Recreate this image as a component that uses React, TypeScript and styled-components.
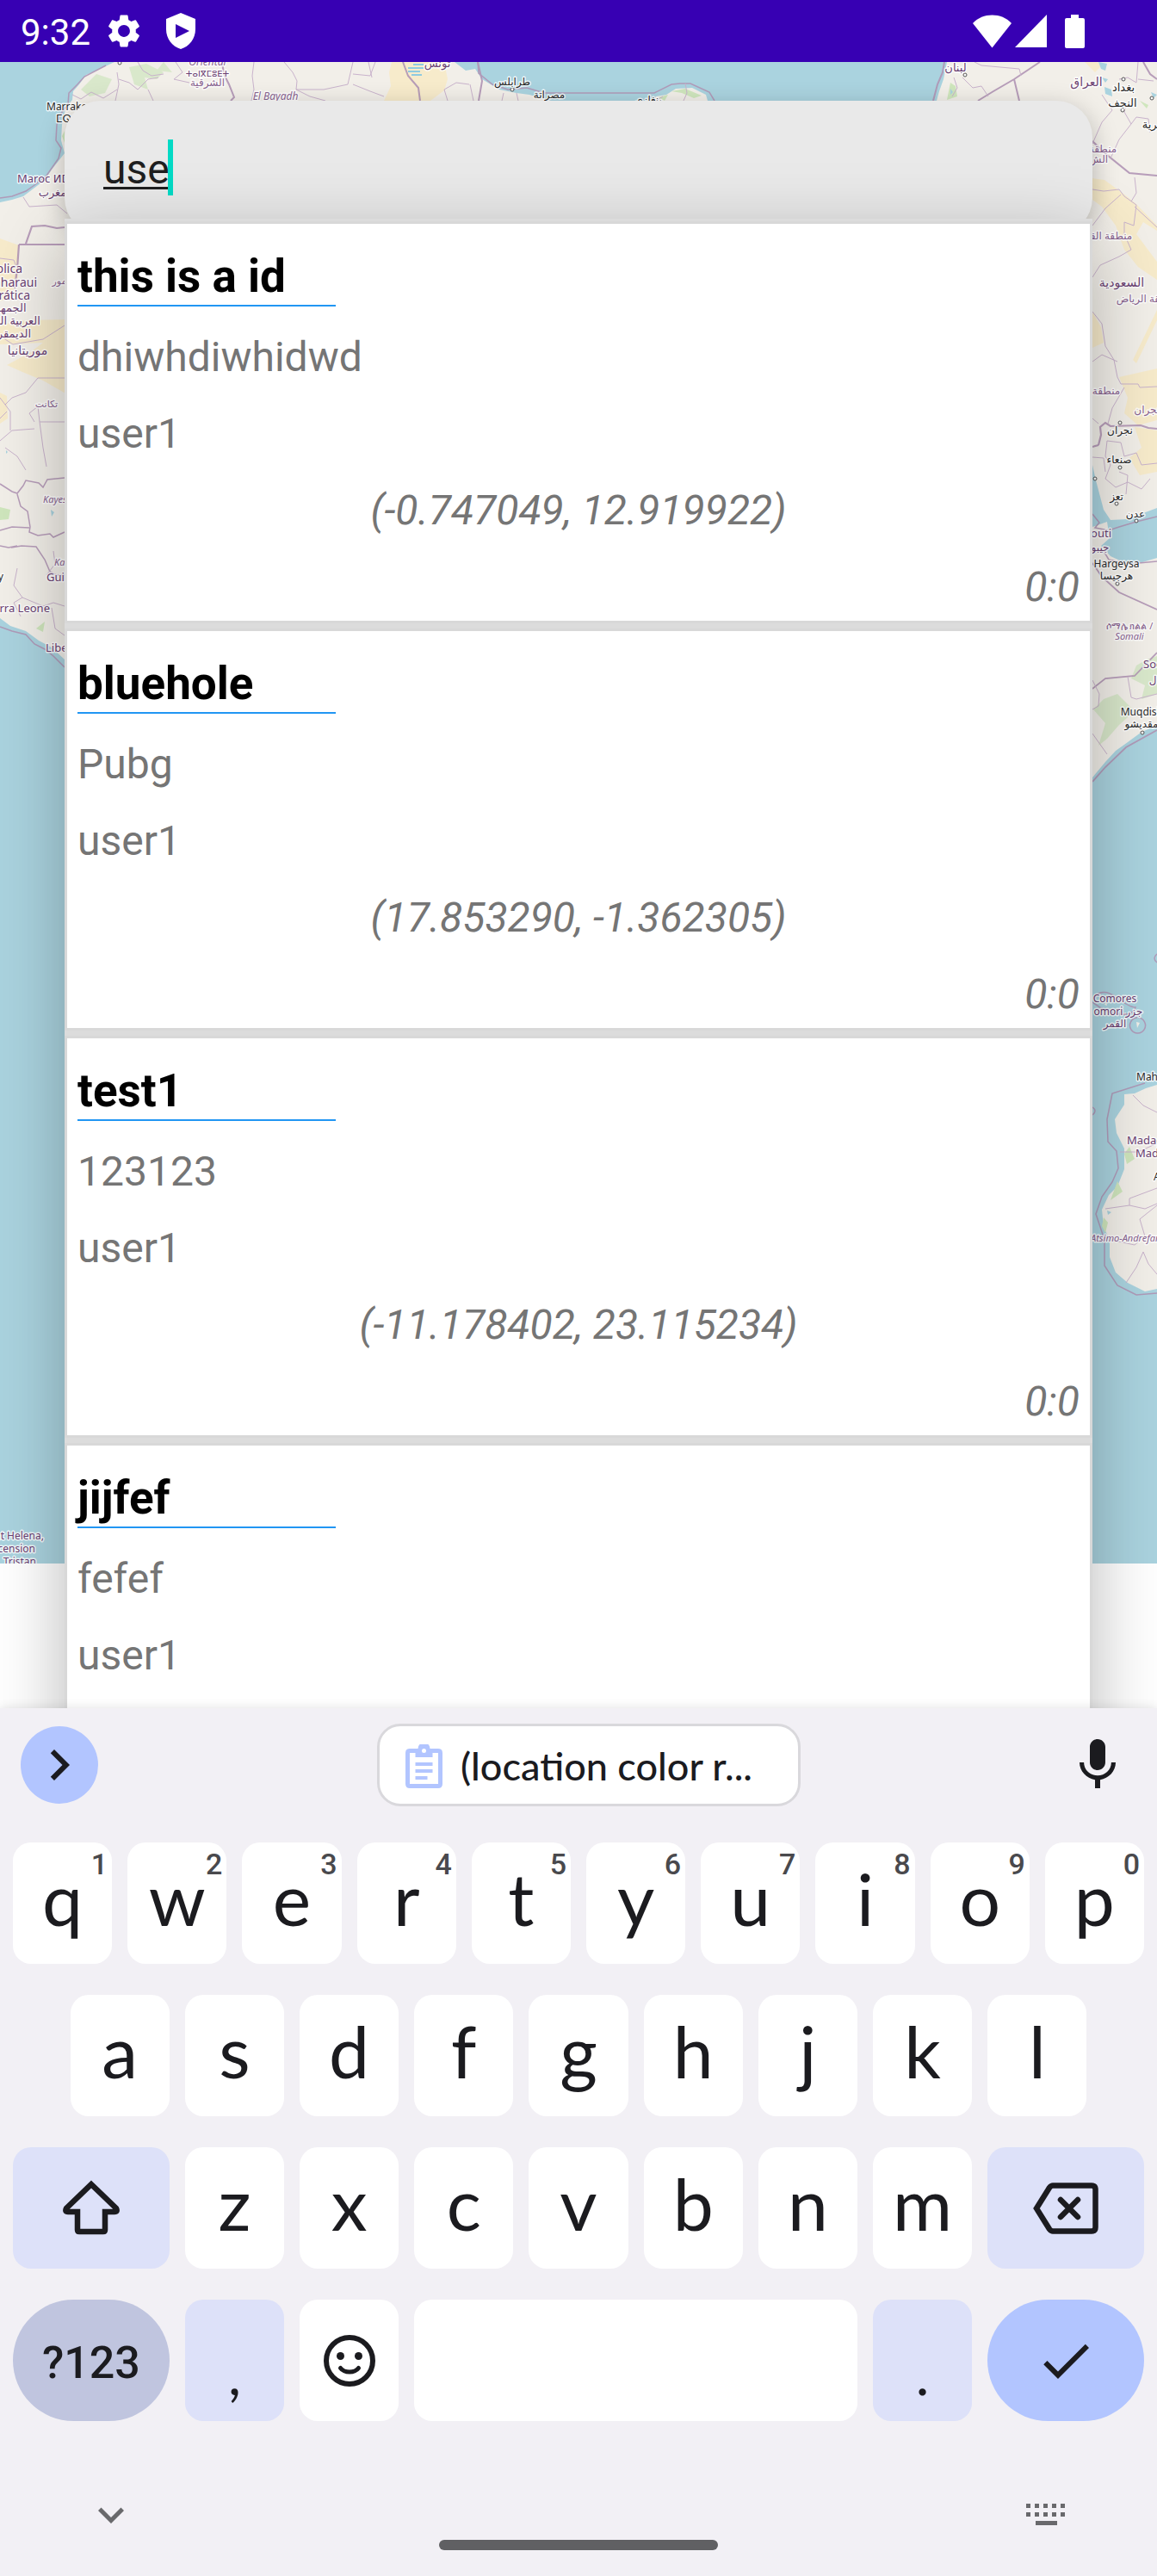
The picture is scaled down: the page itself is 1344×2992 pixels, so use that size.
import React from "react";
import styled, { createGlobalStyle, css } from "styled-components";
import { MdCheck, MdChevronRight, MdKeyboardArrowDown, MdMic, MdSettings } from "react-icons/md";

const GlobalStyle = createGlobalStyle`
  *, *::before, *::after { box-sizing: border-box; }
  body {
    margin: 0;
    background: #ffffff;
    font-family: Roboto, "Noto Sans", sans-serif;
  }
  button { border: 0; padding: 0; margin: 0; cursor: pointer; font-family: inherit; }
  svg { display: block; }
`;

/* ---------- shell ---------- */

const Screen = styled.div`
  display: flex;
  flex-direction: column;
  height: 100vh;
  overflow: hidden;
`;

const StatusBar = styled.header`
  display: flex;
  flex: none;
  align-items: center;
  justify-content: space-between;
  height: 72px;
  padding: 0 84px 0 24px;
  background: #3700b3;
  color: #ffffff;
`;

const StatusGroup = styled.div<{ $gap: number }>`
  display: flex;
  align-items: center;
  gap: ${(p) => p.$gap}px;
`;

const Clock = styled.span`
  padding-top: 3px;
  font-size: 42px;
  line-height: 72px;
`;

const Stage = styled.main`
  position: relative;
  display: flex;
  flex: 1;
  flex-direction: column;
  min-height: 0;
  padding: 45px 75px 0;
  overflow: hidden;
`;

const MapCanvas = styled.svg`
  position: absolute;
  top: 0;
  left: 0;
  width: 100%;
  height: auto;
`;

/* ---------- search ---------- */

const SearchCard = styled.label`
  position: relative;
  display: flex;
  flex: none;
  align-items: center;
  height: 155px;
  padding: 0 45px;
  border-radius: 42px;
  background: #e9e9e9;
  box-shadow: 0 9px 30px rgba(0, 0, 0, 0.26);
`;

const SearchInput = styled.input`
  field-sizing: content;
  min-width: 24px;
  padding: 3px 0 0;
  border: 0;
  outline: 0;
  background: transparent;
  color: #1f1f1f;
  font-family: Roboto, sans-serif;
  font-size: 48px;
  line-height: 57px;
  text-decoration: underline;
  text-decoration-thickness: 3px;
  text-underline-offset: 4px;
`;

const Caret = styled.span`
  width: 6px;
  height: 65px;
  margin-left: -2px;
  background: #03dac5;
`;

const Results = styled.ul`
  position: relative;
  flex: none;
  margin: -18px 0 0;
  padding: 3px 0 0;
  list-style: none;
  background: #dcdcdc;
  box-shadow: 0 24px 78px rgba(0, 0, 0, 0.28);
`;

const ResultItem = styled.li`
  display: flex;
  flex-direction: column;
  gap: 30px;
  min-height: 467px;
  margin-bottom: 6px;
  padding: 29px 12px 11px;
  border: 3px solid #d8d8d8;
  background: #ffffff;
`;

const ResultTitle = styled.h2`
  width: 300px;
  margin: 0;
  border-bottom: 2px solid #2196f3;
  color: #000000;
  font-size: 53px;
  font-weight: 700;
  line-height: 65px;
`;

const ResultBody = styled.div`
  display: flex;
  flex-direction: column;
  gap: 32px;
`;

const Line = styled.p<{ $align?: "center" | "right" }>`
  margin: 0;
  color: #757575;
  font-size: 48px;
  line-height: 57px;
  text-align: ${(p) => p.$align ?? "left"};
  font-style: ${(p) => (p.$align ? "italic" : "normal")};
`;

/* ---------- keyboard ---------- */

const Keyboard = styled.section`
  position: relative;
  display: flex;
  flex: none;
  flex-direction: column;
  background: #f2f0f5;
  color: #1b1b1f;
  font-family: Lato, "Noto Sans", sans-serif;
  box-shadow: 0 0 12px rgba(0, 0, 0, 0.12);
`;

const Strip = styled.div`
  display: grid;
  grid-template-columns: 1fr auto 1fr;
  align-items: center;
  height: 132px;
  padding-left: 24px;
`;

const ExpandButton = styled.button`
  display: grid;
  place-items: center;
  width: 90px;
  height: 90px;
  border-radius: 50%;
  background: #b2c5ff;
  color: #1b1b1f;
`;

const VoiceButton = styled.button`
  display: grid;
  place-items: center;
  justify-self: end;
  width: 90px;
  height: 90px;
  margin-right: 24px;
  background: transparent;
  color: #1b1b1f;
`;

const ClipChip = styled.button`
  display: flex;
  align-items: center;
  gap: 21px;
  width: 492px;
  height: 96px;
  padding: 3px 30px 0;
  border: 3px solid #d9d8dc;
  border-radius: 27px;
  background: #ffffff;
  color: #1b1b1f;
  font-size: 45px;
  font-weight: 500;
  line-height: 57px;
`;

const Rows = styled.div`
  display: flex;
  flex-direction: column;
  gap: 36px;
  padding: 24px 15px 0;
`;

const KeyRow = styled.div`
  display: grid;
  grid-template-columns: repeat(20, minmax(0, 1fr));
  column-gap: 18px;
`;

type Tone = "plain" | "soft" | "mode" | "accent";

const tones: Record<Tone, string> = {
  plain: "#ffffff",
  soft: "#dde1f9",
  mode: "#c0c5df",
  accent: "#b2c5ff",
};

const Key = styled.button<{ $span?: number; $start?: number; $tone?: Tone; $round?: boolean }>`
  position: relative;
  display: flex;
  align-items: center;
  justify-content: center;
  grid-column: ${(p) => (p.$start ? `${p.$start} / ` : "")} span ${(p) => p.$span ?? 2};
  height: 141px;
  border-radius: ${(p) => (p.$round ? 72 : 21)}px;
  background: ${(p) => tones[p.$tone ?? "plain"]};
  color: #1b1b1f;
`;

const KeyText = styled.span<{ $kind?: "letter" | "mode" | "mark" }>`
  font-size: 84px;
  line-height: 129px;
  padding-bottom: 12px;
  ${(p) =>
    p.$kind === "mode" &&
    css`
      font-family: Roboto, sans-serif;
      font-size: 52px;
      font-weight: 500;
      padding: 6px 0 0;
    `}
  ${(p) =>
    p.$kind === "mark" &&
    css`
      font-size: 66px;
      padding: 30px 0 0;
      line-height: 111px;
    `}
`;

const Hint = styled.span`
  position: absolute;
  top: 6px;
  right: 5px;
  color: #49494d;
  font-family: Roboto, sans-serif;
  font-size: 34px;
  font-weight: 500;
  line-height: 39px;
`;

const NavBar = styled.nav`
  display: grid;
  grid-template-columns: 1fr auto 1fr;
  height: 180px;
  padding: 73px 93px 0;
  color: #69696c;
`;

const NavButton = styled.button<{ $end?: boolean }>`
  display: grid;
  place-items: center;
  justify-self: ${(p) => (p.$end ? "end" : "start")};
  width: 72px;
  height: 72px;
  background: transparent;
  color: inherit;
`;

const HomePill = styled.button`
  align-self: end;
  width: 324px;
  height: 12px;
  margin-bottom: 30px;
  border-radius: 6px;
  background: #606063;
`;

/* ---------- icons ---------- */

const ShieldIcon = () => (
  <svg width="34" height="42" viewBox="0 0 34 42" fill="currentColor" aria-hidden>
    <path fillRule="evenodd" d="M17 0 34 7V19C34 30 27 39 17 42 7 39 0 30 0 19V7ZM11 13V29L27 21Z" />
  </svg>
);

const WifiIcon = () => (
  <svg width="45" height="39" viewBox="0 0 45 39" fill="currentColor" aria-hidden>
    <path d="M22.500 38.500 0 10C6 3.500 14 .5 22.500.5S39 3.500 45 10Z" />
  </svg>
);

const SignalIcon = () => (
  <svg width="37" height="38" viewBox="0 0 37 38" fill="currentColor" aria-hidden>
    <path d="M37 0V38H0Z" />
  </svg>
);

const BatteryIcon = () => (
  <svg width="23" height="39" viewBox="0 0 23 39" fill="currentColor" aria-hidden>
    <path d="M7 0H16V4H21Q23 4 23 6V37Q23 39 21 39H2Q0 39 0 37V6Q0 4 2 4H7Z" />
  </svg>
);

const ClipboardIcon = () => (
  <svg width="43" height="51" viewBox="0 0 43 51" fill="#b2c5ff" aria-hidden>
    <path
      fillRule="evenodd"
      d="M5 5H14.500A7 7 0 0 1 28.500 5H38Q43 5 43 10V46Q43 51 38 51H5Q0 51 0 46V10Q0 5 5 5ZM5 10V46H38V10H31.500V15H11.500V10ZM21.500 5A2.500 2.500 0 1 0 21.500 10 2.500 2.500 0 0 0 21.500 5Z"
    />
    <path d="M11.500 21H31.500V25H11.500ZM11.500 29H31.500V33H11.500ZM11.500 37H25.500V41H11.500Z" />
  </svg>
);

const ShiftIcon = () => (
  <svg width="72" height="72" viewBox="0 0 72 72" fill="none" stroke="currentColor" strokeWidth="6.500" aria-hidden>
    <path d="M36 8 65 36Q67 40 63 40H52V61Q52 63 50 63H22Q20 63 20 61V40H9Q5 40 7 36Z" />
  </svg>
);

const BackspaceIcon = () => (
  <svg width="78" height="60" viewBox="0 0 78 60" fill="none" stroke="currentColor" strokeWidth="6.500" aria-hidden>
    <path d="M5 30 20 6Q22 3.500 24 3.500H69Q73.500 3.500 73.500 8V52Q73.500 56.500 69 56.500H24Q22 56.500 20 54Z" />
    <path strokeLinecap="round" d="M33 20 53 40M53 20 33 40" />
  </svg>
);

const EmojiIcon = () => (
  <svg width="60" height="60" viewBox="0 0 60 60" fill="none" stroke="currentColor" strokeWidth="6" aria-hidden>
    <circle cx="30" cy="30" r="27" />
    <circle cx="19.500" cy="24.500" r="4.500" fill="currentColor" stroke="none" />
    <circle cx="40.500" cy="24.500" r="4.500" fill="currentColor" stroke="none" />
    <path strokeLinecap="round" d="M19.500 38.500Q23 43 30 43T40.500 38.500" strokeWidth="5" />
  </svg>
);

const KeyboardIcon = () => (
  <svg width="46" height="26" viewBox="0 0 46 26" fill="currentColor" aria-hidden>
    {[0, 10, 20, 30, 40].map((x) => (
      <path key={x} d={`M${x} 0h5v5h-5zM${x} 10h5v5h-5z`} />
    ))}
    <path d="M11 20H36V25H11Z" />
  </svg>
);

/* ---------- map ---------- */

const Halo = styled.text<{ $tone?: "city" | "country" | "region"; $size?: number }>`
  font-family: "Noto Sans", "DejaVu Sans", sans-serif;
  font-size: ${(p) => p.$size ?? 12}px;
  fill: ${(p) => (p.$tone === "city" ? "#2b2b2b" : p.$tone === "country" ? "#6b4273" : "#8a6591")};
  stroke: #ffffff;
  stroke-width: 3px;
  stroke-opacity: 0.8;
  stroke-linejoin: round;
  paint-order: stroke;
`;

type Label = {
  t: string;
  x: number;
  y: number;
  s?: number;
  k?: "city" | "country" | "region";
  a?: "start" | "middle" | "end";
  i?: boolean;
};

const labels: Label[] = [
  { t: "Oriental", x: 241, y: 76, i: true },
  { t: "ⵜⴰⵏⴳⵎⵓⴹⵜ", x: 241, y: 89, s: 10, k: "country" },
  { t: "الشرقية", x: 241, y: 100 },
  { t: "El Bayadh", x: 320, y: 116, i: true },
  { t: "Marrake", x: 54, y: 128, k: "city", a: "start" },
  { t: "ⵎⵕⵕ", x: 65, y: 142, k: "city", a: "start" },
  { t: "Maroc ⵍⵎ", x: 20, y: 212, s: 13, k: "country", a: "start" },
  { t: "مغرب", x: 61, y: 228, s: 13, k: "country" },
  { t: "República", x: 26, y: 317, s: 14, k: "country", a: "end" },
  { t: "Saharaui", x: 43, y: 333, s: 14, k: "country", a: "end" },
  { t: "Democrática", x: 35, y: 348, s: 14, k: "country", a: "end" },
  { t: "الجمهورية", x: 4, y: 362, s: 13, k: "country" },
  { t: "العربية الصحراوية", x: 0, y: 377, s: 13, k: "country" },
  { t: "الديمقراطية", x: 4, y: 392, s: 13, k: "country" },
  { t: "موريتانيا", x: 32, y: 412, s: 14, k: "country" },
  { t: "مور", x: 69, y: 330, s: 11 },
  { t: "تكانت", x: 54, y: 473, s: 11 },
  { t: "Kayes", x: 50, y: 584, s: 11, a: "start", i: true },
  { t: "Ka", x: 63, y: 657, s: 11, a: "start", i: true },
  { t: "Gui", x: 54, y: 675, s: 13, k: "country", a: "start" },
  { t: "Conakry", x: 4, y: 674, s: 12, k: "city", a: "end" },
  { t: "Sierra Leone", x: 58, y: 711, s: 13, k: "country", a: "end" },
  { t: "Libe", x: 53, y: 757, s: 13, k: "country", a: "start" },
  { t: "Saint Helena,", x: 51, y: 1788, s: 12, k: "country", a: "end" },
  { t: "Ascension", x: 41, y: 1803, s: 12, k: "country", a: "end" },
  { t: "Tristan", x: 42, y: 1818, s: 12, k: "country", a: "end" },
  { t: "تونس", x: 508, y: 78, s: 13, k: "country" },
  { t: "طرابلس", x: 595, y: 99, k: "city" },
  { t: "مصراتة", x: 638, y: 114, k: "city" },
  { t: "بنغازي", x: 753, y: 120, k: "city" },
  { t: "لبنان", x: 1110, y: 83, s: 13, k: "country" },
  { t: "العراق", x: 1262, y: 100, s: 14, k: "country" },
  { t: "بغداد", x: 1305, y: 106, s: 13, k: "city" },
  { t: "النجف", x: 1304, y: 124, s: 13, k: "city" },
  { t: "البصرية", x: 1347, y: 149, s: 13, k: "city" },
  { t: "منطقة", x: 1281, y: 177, s: 12 },
  { t: "الش", x: 1276, y: 189, s: 12 },
  { t: "منطقة القصيم", x: 1280, y: 278, s: 12 },
  { t: "السعودية", x: 1303, y: 333, s: 14, k: "country" },
  { t: "منطقة الرياض", x: 1332, y: 351, s: 12 },
  { t: "منطقة", x: 1285, y: 458, s: 12 },
  { t: "منطقة نجران", x: 1350, y: 480, s: 12 },
  { t: "نجران", x: 1301, y: 504, s: 12, k: "city" },
  { t: "صنعاء", x: 1300, y: 538, s: 12, k: "city" },
  { t: "تعز", x: 1297, y: 581, s: 12, k: "city" },
  { t: "عدن", x: 1319, y: 601, s: 12, k: "city" },
  { t: "outi", x: 1291, y: 624, s: 13, k: "country", a: "end" },
  { t: "جيبو", x: 1278, y: 640, s: 12, k: "country" },
  { t: "Hargeysa", x: 1297, y: 659, s: 12, k: "city" },
  { t: "هرجيسا", x: 1297, y: 673, s: 12, k: "city" },
  { t: "ሶማሌ ክልል /", x: 1312, y: 731, s: 11 },
  { t: "Somali", x: 1312, y: 743, s: 11, i: true },
  { t: "Soomaaliya", x: 1328, y: 776, s: 13, k: "country", a: "start" },
  { t: "الصومال", x: 1356, y: 794, s: 12, k: "country" },
  { t: "Muqdisho", x: 1330, y: 831, s: 12, k: "city" },
  { t: "مقديشو", x: 1326, y: 845, s: 12, k: "city" },
  { t: "Comores", x: 1295, y: 1164, s: 12, k: "country" },
  { t: "omori جزر", x: 1299, y: 1179, s: 12, k: "country" },
  { t: "القمر", x: 1295, y: 1193, s: 12, k: "country" },
  { t: "Mahajanga", x: 1320, y: 1255, s: 12, k: "city", a: "start" },
  { t: "Madagasikara", x: 1309, y: 1329, s: 13, k: "country", a: "start" },
  { t: "Madagascar", x: 1319, y: 1344, s: 13, k: "country", a: "start" },
  { t: "Antananarivo", x: 1340, y: 1371, s: 12, k: "city", a: "start" },
  { t: "Atsimo-Andrefana", x: 1267, y: 1442, s: 11, a: "start", i: true },
];

const pins: [number, number][] = [
  [139, 73], [595, 104], [1305, 92], [1304, 128], [1121, 87], [1338, 114], [1301, 491], [1301, 543],
  [1297, 585], [1320, 605], [1272, 556], [1298, 678], [1327, 851],
];

const WorldMap = () => (
  <MapCanvas viewBox="0 72 1344 1744" role="img" aria-label="Map of Africa and the Middle East">
    <rect x="0" y="72" width="1344" height="1744" fill="#aad3df" />
    <g fill="#f2efe9">
      <path d="M133 72 112 82 100 87 92 98 85 106 84 116 76 126 72 145 71 163 75 178 60 197 52 209 35 222 27 228 14 232 0 235V718L12 727 30 733 45 744 60 752 75 766 120 790H600L700 300 822 117 820 110 804 102 785 103 774 110 762 112 756 120 640 117 615 110 600 108 580 104 560 92 552 80 541 82 528 72Z" />
      <path d="M1100 72 1096 92 1091 106 1088 117 1150 300 1269 540 1273 558 1282 592 1290 604 1310 603 1328 596 1344 590V72Z" />
      <path d="M1230 560 1269 612 1286 606 1289 625 1279 634 1290 646 1305 653 1320 655 1344 648V842L1325 851 1310 862 1296 872 1284 885 1269 903 1200 940Z" />
      <path d="M1344 1260 1331 1264 1318 1270 1306 1271 1306 1283 1295 1300 1297 1316 1306 1334 1306 1358 1298 1378 1288 1388 1280 1405 1282 1425 1289 1440 1289 1460 1296 1478 1310 1490 1330 1500 1344 1497Z" />
      <path d="M1285 1164 1283 1167 1286 1168ZM1308 1176 1304 1177 1308 1180ZM1320 1187 1324 1188 1321 1194Z" />
    </g>
    <g fill="#f7ebcb">
      <path d="M0 277 22 285 21 322 12 345 0 350Z" />
      <path d="M0 377 30 372 78 371V458L50 442 26 432 8 424 34 410 50 398 0 400Z" />
      <path d="M0 456 8 460 9 486 0 492Z" />
      <path d="M455 72 452 84 454 100 446 117H500L516 105 520 92 516 72Z" />
      <path d="M1260 72 1272 84 1280 76 1275 72Z" />
      <path d="M1269 207 1283 209 1305 225 1320 237 1344 262V268L1328 258 1320 272 1344 304V325L1322 310 1306 290 1296 262 1280 240 1269 232Z" />
      <path d="M1344 360 1332 385 1316 418 1320 422 1344 372Z" />
      <path d="M1300 438 1344 428V488L1322 494 1306 480 1310 462Z" />
      <path d="M1318 496 1344 500V548L1324 552 1312 532 1326 520Z" />
      <path d="M1269 362 1279 380 1282 398 1269 404Z" />
    </g>
    <g fill="#cfe6bd">
      <path d="M150 78 170 74 190 84 182 92 168 90 172 104 156 98ZM190 72 200 84 182 82ZM112 86 130 92 122 108 104 112 94 104Z" opacity=".7" />
      <path d="M780 106 796 103 815 111 806 114 792 108ZM765 113 776 110 772 117Z" />
      <path d="M1104 96 1110 100 1112 112 1100 116Z" />
      <path d="M1324 117 1334 122 1332 126Z" />
      <path d="M0 589 12 592 10 603 0 604ZM42 730 52 722 50 734Z" />
      <path d="M1320 773 1332 766 1344 762V806L1326 812 1330 796 1314 788ZM1270 824 1282 812 1298 806 1318 826 1300 842 1286 858 1276 866 1284 840Z" opacity=".7" />
      <path d="M1312 1332 1318 1346 1309 1352 1306 1340ZM1298 1372 1304 1384 1290 1394ZM1282 1414 1287 1420 1284 1432 1280 1424Z" />
      <path d="M72 158 75 152V166Z" />
    </g>
    <g fill="#aad3df">
      <path d="M1276 72 1286 74 1284 82 1279 80ZM1280 90 1287 92 1284 96ZM1283 101 1291 104 1292 112 1284 109ZM1337 107 1344 110 1340 114Z" />
      <path d="M1104 103 1107 107 1104 110ZM59 592 63 595 60 600ZM7 523 9 525 7 527Z" />
      <path d="M1286 1406 1291 1408 1287 1411Z" />
    </g>
    <path d="M480 75h12M474 79h18M474 83h14M478 87h12" stroke="#8fcbe0" strokeWidth="2" />
    <g fill="none" stroke="#b195b5" strokeWidth="1.500" opacity=".9">
      <path d="M123 76 98 89 90 98 80 108 79 121 70 133 66 145 65 163 71 172 68 184 54 204 40 215 30 222 14 228 0 230" />
      <path d="M0 562 14 571 20 573 27 564 30 558 45 561 50 566 55 557 75 555" />
      <path d="M20 574 24 588 32 594 35 612 34 618 44 622 58 620 62 624 75 618M0 616 14 612 34 613M0 634 10 636 20 634M13 636 25 634 42 635 52 650 58 664 66 668 75 668" />
      <path d="M30 283 37 263 52 262 66 265 75 264M22 284H78M22 284 20 312 17 335" strokeWidth="2.200" />
      <path d="M0 728 14 733 30 737 40 748 52 754 62 762 75 775" />
      <path d="M555 72 556 85 572 98 590 104 612 102 632 108H760L780 98 790 97 802 97 824 107 830 117" />
      <path d="M468 72 474 88 486 102 488 117M555 72 560 94 556 117" strokeWidth="2" />
      <path d="M258 72 260 86 266 98 272 113 268 117" strokeWidth="2" />
      <path d="M1097 72 1095 84 1089 98 1084 117M1208 72 1178 92 1154 106 1136 117M1178 92 1184 117M1328 72 1336 86 1344 92" strokeWidth="2" />
      <path d="M1269 164 1286 180 1312 201 1344 204" strokeWidth="2.200" />
      <path d="M1276 517 1279 505 1278 496 1284 491 1290 495 1325 494 1334 497 1344 498M1276 517 1269 519" strokeWidth="2.200" />
      <path d="M1269 597 1277 607 1272 613 1288 616 1300 612 1320 606 1344 600M1269 640 1282 640 1288 650 1312 655 1344 652" />
      <path d="M1269 654 1280 670 1300 688 1344 708M1269 800 1284 788 1318 785 1344 758M1269 908 1284 891 1308 868 1344 848" strokeWidth="1.800" />
      <path d="M1330 1258 1292 1270 1286 1300 1287 1326 1297 1337 1299 1357 1292 1373 1280 1390 1273 1410 1283 1440 1283 1470 1298 1493 1320 1504 1344 1502" />
      <path d="M1269 1160Q1280 1146 1296 1158T1319 1170Q1316 1180 1300 1178T1269 1164M1322 1182A9 9 0 1 1 1321 1182M1269 1286Q1275 1290 1269 1295M1344 1108Q1338 1113 1344 1118" />
    </g>
    <g fill="none" stroke="#c9b3cc" strokeWidth="1">
      <path d="M84 110 94 115 106 107 120 114 136 104M136 84 138 98 134 117M138 92 150 96 160 104 172 92 184 90M172 104 178 117M204 72 212 84 202 92 220 96M160 72 166 82 176 88 190 86" />
      <path d="M295 72 293 88 295 104 292 117M330 72 340 84 345 94 344 104 376 104 404 98 410 72M344 104 360 112 378 117M410 86 430 88 436 72M410 98 430 106 446 112M428 72 432 90" />
      <path d="M520 117 516 104 530 96 545 98M546 98 550 117M585 108 583 117M600 108 602 117" />
      <path d="M762 117 770 112M796 97 798 108 794 117M1132 72 1140 76 1184 80 1186 88M1118 90 1130 102 1140 100 1148 112M1108 90 1112 102 1106 112" />
      <path d="M27 229 34 240 66 238 78 248M0 300 16 302 22 318M0 390 15 400 50 394 75 378M44 439H75M44 439 30 456 14 462 6 470M0 462 12 478 12 500M0 486 8 478M40 490 34 480 44 472 46 490H75M46 490 50 520 54 542M0 512 14 500 40 498M6 520 20 530 30 546" />
      <path d="M20 660 16 680 26 694 16 700 24 716M26 694 50 704 62 700 75 704M62 640 64 655 54 668M60 706 64 730 75 738" />
      <path d="M1269 167 1280 142 1292 128 1280 110M1290 184 1300 162 1314 144 1306 130 1308 120M1314 144 1320 136 1334 138 1336 154M1300 92 1310 90 1320 96 1322 72M1322 92 1340 94" />
      <path d="M1269 220 1282 222 1300 220 1306 228 1320 238 1317 262 1306 258M1318 206 1320 224 1314 234M1269 262 1284 242 1302 226M1269 322 1278 308 1300 298 1314 290 1306 272 1306 258M1318 240 1344 264" />
      <path d="M1269 362 1280 376 1284 402 1294 418 1298 438 1302 446M1269 420 1280 412 1298 420M1302 446 1322 446 1324 450 1344 449M1306 450 1292 474 1287 492M1269 486 1276 492" />
      <path d="M1286 512 1302 514 1306 530 1320 526 1326 540 1344 538M1286 512 1284 530 1290 540 1284 556 1296 566 1310 560 1326 568 1336 556M1300 548 1310 552 1308 574M1269 531 1282 532 1284 548" />
      <path d="M1310 786 1314 810 1320 812 1344 806M1269 790 1277 806 1276 820 1269 824M1269 852 1286 876" />
      <path d="M1316 1272 1328 1284 1344 1292M1301 1338 1322 1338 1344 1328M1284 1404 1312 1400 1312 1392 1344 1380M1312 1400 1330 1404 1344 1398M1290 1440 1318 1446 1330 1436 1324 1416 1344 1400M1308 1490 1320 1472 1328 1454 1334 1468 1344 1480" />
    </g>
    <g fill="#ffffff" stroke="#555555" strokeWidth="1">
      {pins.map(([x, y]) => (
        <circle key={`${x}-${y}`} cx={x} cy={y} r="2" />
      ))}
    </g>
    {labels.map((l) => (
      <Halo
        key={`${l.t}-${l.y}`}
        x={l.x}
        y={l.y}
        $size={l.s}
        $tone={l.k}
        textAnchor={l.a ?? "middle"}
        fontStyle={l.i ? "italic" : "normal"}
      >
        {l.t}
      </Halo>
    ))}
  </MapCanvas>
);

/* ---------- data ---------- */

const results = [
  { title: "this is a id", note: "dhiwhdiwhidwd", user: "user1", at: "(-0.747049, 12.919922)", time: "0:0" },
  { title: "bluehole", note: "Pubg", user: "user1", at: "(17.853290, -1.362305)", time: "0:0" },
  { title: "test1", note: "123123", user: "user1", at: "(-11.178402, 23.115234)", time: "0:0" },
  { title: "jijfef", note: "fefef", user: "user1", at: "", time: "" },
];

const topRow = "qwertyuiop".split("");
const homeRow = "asdfghjkl".split("");
const lowRow = "zxcvbnm".split("");

export default function App() {
  const [query, setQuery] = React.useState("use");

  return (
    <Screen>
      <GlobalStyle />
      <StatusBar>
        <StatusGroup $gap={16}>
          <Clock>9:32</Clock>
          <StatusGroup $gap={26}>
            <MdSettings size={46} />
            <ShieldIcon />
          </StatusGroup>
        </StatusGroup>
        <StatusGroup $gap={21}>
          <StatusGroup $gap={4}>
            <WifiIcon />
            <SignalIcon />
          </StatusGroup>
          <BatteryIcon />
        </StatusGroup>
      </StatusBar>

      <Stage>
        <WorldMap />
        <SearchCard>
          <SearchInput
            aria-label="Search"
            value={query}
            spellCheck={false}
            onChange={(e) => setQuery(e.target.value)}
          />
          <Caret />
        </SearchCard>
        <Results>
          {results.map((r) => (
            <ResultItem key={r.title}>
              <ResultTitle>{r.title}</ResultTitle>
              <ResultBody>
                <Line>{r.note}</Line>
                <Line>{r.user}</Line>
                {r.at && <Line $align="center">{r.at}</Line>}
                {r.time && <Line $align="right">{r.time}</Line>}
              </ResultBody>
            </ResultItem>
          ))}
        </Results>
      </Stage>

      <Keyboard aria-label="Keyboard">
        <Strip>
          <ExpandButton aria-label="More">
            <MdChevronRight size={72} />
          </ExpandButton>
          <ClipChip>
            <ClipboardIcon />
            (location color r...
          </ClipChip>
          <VoiceButton aria-label="Voice input">
            <MdMic size={72} />
          </VoiceButton>
        </Strip>
        <Rows>
          <KeyRow>
            {topRow.map((c, i) => (
              <Key key={c}>
                <KeyText>{c}</KeyText>
                <Hint>{(i + 1) % 10}</Hint>
              </Key>
            ))}
          </KeyRow>
          <KeyRow>
            {homeRow.map((c, i) => (
              <Key key={c} $start={i * 2 + 2}>
                <KeyText>{c}</KeyText>
              </Key>
            ))}
          </KeyRow>
          <KeyRow>
            <Key $span={3} $tone="soft" aria-label="Shift">
              <ShiftIcon />
            </Key>
            {lowRow.map((c) => (
              <Key key={c}>
                <KeyText>{c}</KeyText>
              </Key>
            ))}
            <Key $span={3} $tone="soft" aria-label="Backspace">
              <BackspaceIcon />
            </Key>
          </KeyRow>
          <KeyRow>
            <Key $span={3} $tone="mode" $round>
              <KeyText $kind="mode">?123</KeyText>
            </Key>
            <Key $tone="soft">
              <KeyText $kind="mark">,</KeyText>
            </Key>
            <Key aria-label="Emoji">
              <EmojiIcon />
            </Key>
            <Key $span={8} aria-label="Space" />
            <Key $tone="soft">
              <KeyText $kind="mark">.</KeyText>
            </Key>
            <Key $span={3} $tone="accent" $round aria-label="Done">
              <MdCheck size={72} />
            </Key>
          </KeyRow>
        </Rows>
        <NavBar>
          <NavButton aria-label="Hide keyboard">
            <MdKeyboardArrowDown size={60} />
          </NavButton>
          <HomePill aria-label="Home" />
          <NavButton $end aria-label="Switch keyboard">
            <KeyboardIcon />
          </NavButton>
        </NavBar>
      </Keyboard>
    </Screen>
  );
}
